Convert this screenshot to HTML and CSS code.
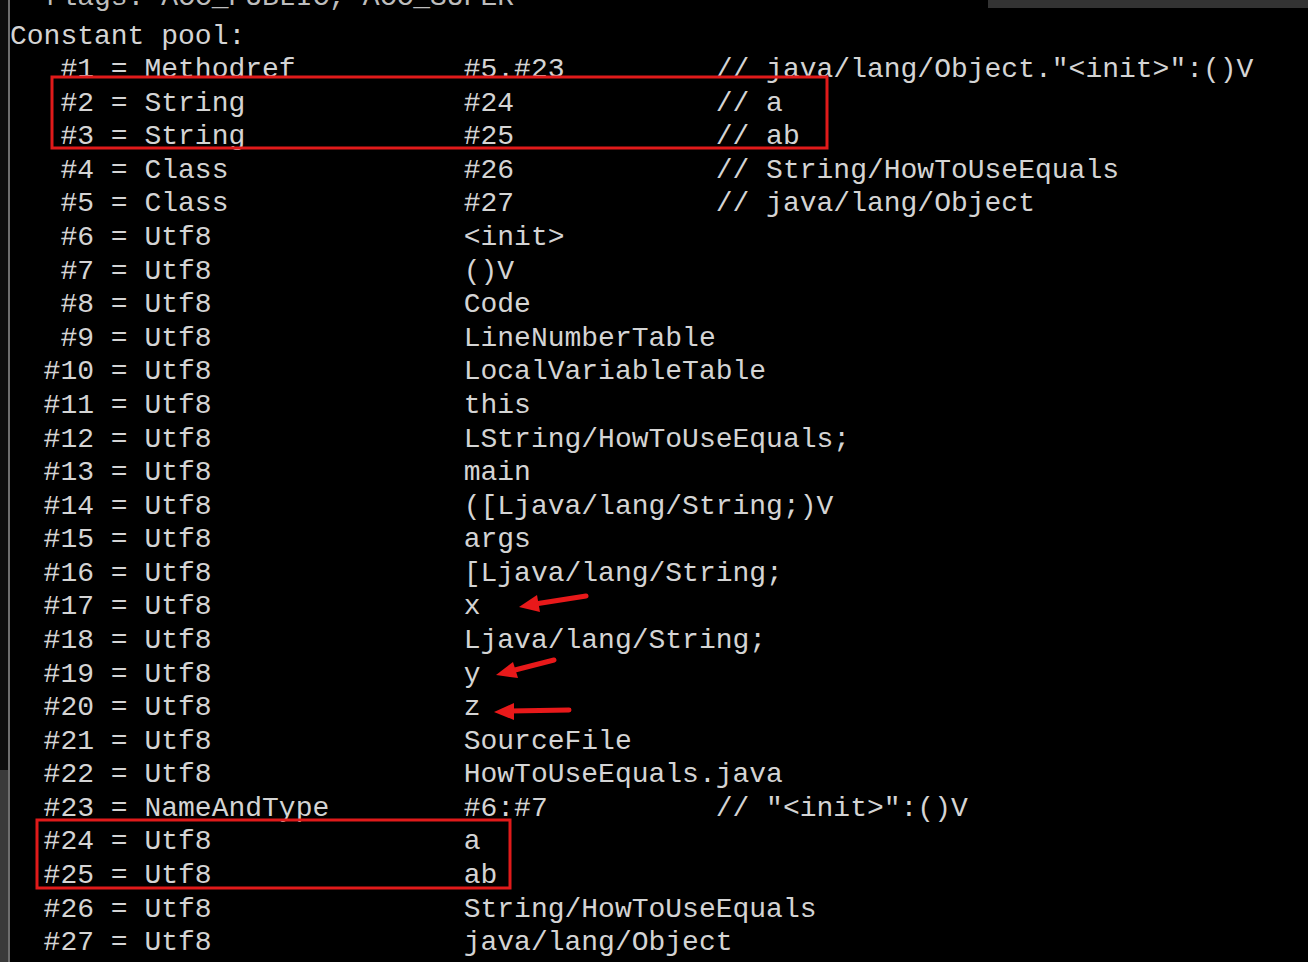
FILE: index.html
```html
<!DOCTYPE html>
<html lang="en">
<head>
<meta charset="utf-8">
<title>javap - Constant pool</title>
<link rel="stylesheet" href="styles.css">
</head>
<body>
<div class="screen">
  <div class="side-strip"></div>
  <div class="console">
<div class="prev-line">  flags: ACC_PUBLIC, ACC_SUPER</div>
<pre class="output">Constant pool:
   #1 = Methodref          #5.#23         // java/lang/Object."&lt;init&gt;":()V
   #2 = String             #24            // a
   #3 = String             #25            // ab
   #4 = Class              #26            // String/HowToUseEquals
   #5 = Class              #27            // java/lang/Object
   #6 = Utf8               &lt;init&gt;
   #7 = Utf8               ()V
   #8 = Utf8               Code
   #9 = Utf8               LineNumberTable
  #10 = Utf8               LocalVariableTable
  #11 = Utf8               this
  #12 = Utf8               LString/HowToUseEquals;
  #13 = Utf8               main
  #14 = Utf8               ([Ljava/lang/String;)V
  #15 = Utf8               args
  #16 = Utf8               [Ljava/lang/String;
  #17 = Utf8               x
  #18 = Utf8               Ljava/lang/String;
  #19 = Utf8               y
  #20 = Utf8               z
  #21 = Utf8               SourceFile
  #22 = Utf8               HowToUseEquals.java
  #23 = NameAndType        #6:#7          // "&lt;init&gt;":()V
  #24 = Utf8               a
  #25 = Utf8               ab
  #26 = Utf8               String/HowToUseEquals
  #27 = Utf8               java/lang/Object
{</pre>
  </div>
  <div class="top-bar"></div>
  <svg class="annotations" width="1308" height="962" viewBox="0 0 1308 962" aria-hidden="true">
    <rect class="mark-box" x="52" y="77" width="775" height="71"/>
    <rect class="mark-box" x="37" y="820" width="473" height="68"/>
    <line class="mark-line" x1="586" y1="596" x2="535" y2="604"/>
    <polygon class="mark-head" points="519,607 540,612 537,595"/>
    <line class="mark-line" x1="554" y1="660" x2="511" y2="671"/>
    <polygon class="mark-head" points="496,675 518,678 513,662"/>
    <line class="mark-line" x1="569" y1="710" x2="510" y2="711"/>
    <polygon class="mark-head" points="494,712 514,720 514,703"/>
  </svg>
</div>
</body>
</html>
```

FILE: styles.css
```css
html, body {
  margin: 0;
  padding: 0;
  background: #000;
}

.screen {
  position: relative;
  width: 1308px;
  height: 962px;
  overflow: hidden;
  display: flex;
  background: #000;
}

.side-strip {
  flex: 0 0 8px;
  height: 100%;
  border-right: 2px solid #6e6e6e;
  background: linear-gradient(to bottom, #0d0d0d 0, #0d0d0d 770px, #3a3a3a 770px, #3a3a3a 100%);
}

.console {
  flex: 1;
  overflow: hidden;
  font-family: "Liberation Mono", "DejaVu Sans Mono", monospace;
  font-size: 28px;
  line-height: 33.58px;
  color: #d4d4d4;
}

.prev-line {
  margin-top: -19px;
  height: 33.58px;
  white-space: pre;
  color: #bdbdbd;
}

.output {
  margin: 5px 0 0 0;
  padding: 0;
  font: inherit;
  white-space: pre;
}

.top-bar {
  position: absolute;
  top: 0;
  right: 0;
  width: 320px;
  height: 8px;
  background: #333;
}

.annotations {
  position: absolute;
  left: 0;
  top: 0;
  pointer-events: none;
}

.mark-box {
  fill: none;
  stroke: #e01a1a;
  stroke-width: 3;
}

.mark-line {
  stroke: #e8191a;
  stroke-width: 5;
  stroke-linecap: round;
}

.mark-head {
  fill: #e8191a;
}
```
